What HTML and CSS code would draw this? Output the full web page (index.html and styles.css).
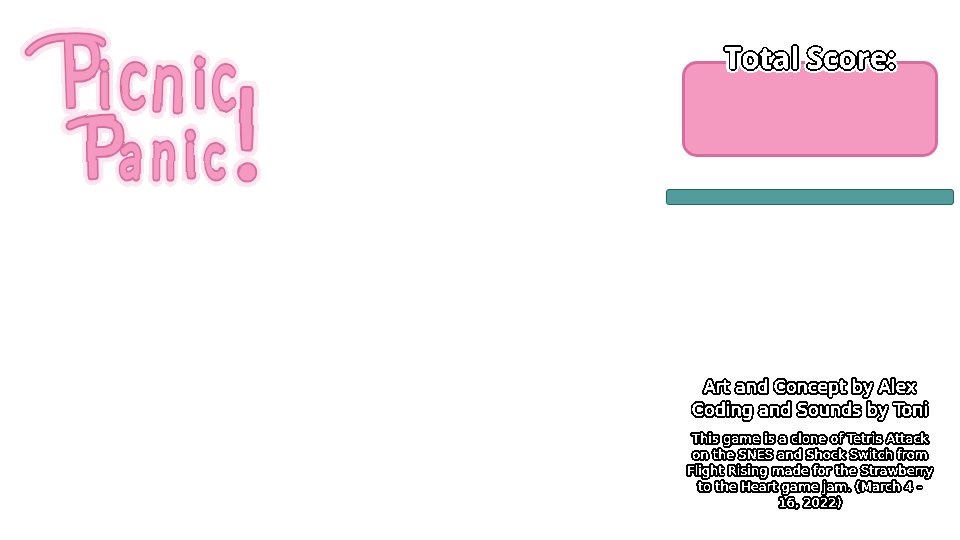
FILE: index.html
```html
<!DOCTYPE html>
<html>
<head>
    <meta charset="UTF-8">
    <title>Picnic Panic!</title>
    <link rel="stylesheet" href="styles.css">
</head>
<body>
    <svg class="filters" width="0" height="0">
        <filter id="crisp" x="-5%" y="-5%" width="110%" height="110%" color-interpolation-filters="sRGB">
            <feComponentTransfer>
                <feFuncR type="discrete" tableValues="0 1"/>
                <feFuncG type="discrete" tableValues="0 1"/>
                <feFuncB type="discrete" tableValues="0 1"/>
                <feFuncA type="discrete" tableValues="0 1"/>
            </feComponentTransfer>
        </filter>
        <filter id="handDrawn" x="-5%" y="-5%" width="110%" height="110%" color-interpolation-filters="sRGB">
            <feTurbulence type="fractalNoise" baseFrequency="0.03" numOctaves="1" seed="4" result="noise"/>
            <feDisplacementMap in="SourceGraphic" in2="noise" scale="4" xChannelSelector="R" yChannelSelector="G"/>
            <feComponentTransfer>
                <feFuncA type="discrete" tableValues="0 1"/>
            </feComponentTransfer>
        </filter>
    </svg>

    <div class="page">
        <svg class="logo" width="270" height="195" viewBox="0 0 270 195" role="img" aria-label="Picnic Panic!">
            <defs>
                <g id="logoLetters">
                    <path class="swash" d="M29 52 C38 41 52 37 68 37 C84 36 98 38 103 43"/>
                    <path class="swash" d="M70 126 C80 121 96 118 112 118"/>
                    <text transform="translate(62 106) rotate(-2) scale(.72 1)" font-size="96">P</text>
                    <text transform="translate(99 106) scale(.8 1)" font-size="62">i</text>
                    <text transform="translate(120 106) scale(.68 1)" font-size="80">c</text>
                    <text transform="translate(152 108) rotate(2) scale(.72 1)" font-size="78">n</text>
                    <text transform="translate(194 105) scale(.8 1)" font-size="66">i</text>
                    <text transform="translate(212 108) scale(.62 1)" font-size="80">c</text>
                    <text transform="translate(232 177) scale(.95 1)" font-size="122">!</text>
                    <text transform="translate(84 176) rotate(-1) scale(.85 .95)" font-size="82">P</text>
                    <text transform="translate(120 177) scale(.7 1)" font-size="62">a</text>
                    <text transform="translate(152 176) scale(.66 1)" font-size="62">n</text>
                    <text transform="translate(185 175) scale(.8 1)" font-size="60">i</text>
                    <text transform="translate(205 178) scale(.64 1)" font-size="64">c</text>
                </g>
            </defs>
            <g class="logo-art">
                <use href="#logoLetters" class="logo-halo"/>
                <use href="#logoLetters" class="logo-edge"/>
                <use href="#logoLetters" class="logo-fill"/>
            </g>
        </svg>

        <aside class="sidebar">
            <div class="score">
                <h1 class="score-title">Total Score:</h1>
                <div class="score-box"></div>
            </div>
            <div class="bar"></div>
            <div class="credits">
                <p class="credits-names">Art and Concept by Alex<br>Coding and Sounds by Toni</p>
                <p class="credits-about">This game is a clone of Tetris Attack on the SNES and Shock Switch from Flight Rising made for the Strawberry to the Heart game jam. (March 4 - 16, 2022)</p>
            </div>
        </aside>
    </div>
</body>
</html>
```

FILE: styles.css
```css
html, body {
    margin: 0;
    height: 100%;
    background-color: #fff;
    overflow: hidden;
}

.filters {
    position: absolute;
}

.page {
    display: flex;
    justify-content: space-between;
    height: 540px;
}

.logo {
    display: block;
}

.logo-art {
    filter: url(#handDrawn);
}

.logo text {
    font-family: "Lato", sans-serif;
    font-weight: 300;
}

.logo .swash {
    fill: none;
}

.logo-halo, .logo-edge, .logo-fill {
    stroke-linecap: round;
    stroke-linejoin: round;
}

.logo-halo {
    fill: #fde6f0;
    stroke: #fde6f0;
    stroke-width: 19px;
}

.logo-edge {
    fill: #d96c9f;
    stroke: #d96c9f;
    stroke-width: 9px;
}

.logo-fill {
    fill: #f49ac1;
    stroke: #f49ac1;
    stroke-width: 5px;
}

.sidebar {
    width: 288px;
    margin-right: 6px;
    display: flex;
    flex-direction: column;
}

.score {
    padding-top: 40px;
    display: flex;
    flex-direction: column;
    align-items: center;
}

.score-title {
    margin: 0 0 -15px;
    position: relative;
    font-family: "Open Sans", sans-serif;
    font-weight: 700;
    font-size: 29.5px;
    line-height: 36px;
    color: #fff;
    filter: url(#crisp);
    text-shadow:
        -1px 0 0 #000, 1px 0 0 #000, 0 -1px 0 #000, 0 1px 0 #000,
        -1px -1px 0 #000, 1px -1px 0 #000, -1px 1px 0 #000, 1px 1px 0 #000,
        -2px 0 0 #000, 2px 0 0 #000, 0 -2px 0 #000, 0 2px 0 #000,
        -4px 0 0 #fff, 4px 0 0 #fff, 0 -4px 0 #fff, 0 4px 0 #fff,
        -3px -3px 0 #fff, 3px -3px 0 #fff, -3px 3px 0 #fff, 3px 3px 0 #fff;
}

.score-box {
    box-sizing: border-box;
    width: 256px;
    height: 96px;
    background-color: #f49ac1;
    border: 3px solid #d96c9f;
    border-radius: 15px;
}

.bar {
    box-sizing: border-box;
    height: 16px;
    margin-top: 32px;
    background-color: #539c9c;
    border: 1px solid #1f6666;
    border-radius: 3px;
}

.credits {
    margin-top: 171px;
    padding: 0 20px;
    text-align: center;
    color: #fff;
    font-family: "DejaVu Sans", sans-serif;
    filter: url(#crisp);
    -webkit-text-stroke: 0.5px #fff;
    text-shadow:
        -1px 0 0 #000, 1px 0 0 #000, 0 -1px 0 #000, 0 1px 0 #000,
        -2px 0 0 #000, 2px 0 0 #000, 0 -2px 0 #000, 0 2px 0 #000,
        -1px -1px 0 #000, 1px -1px 0 #000, -1px 1px 0 #000, 1px 1px 0 #000,
        -2px -1px 0 #000, 2px -1px 0 #000, -2px 1px 0 #000, 2px 1px 0 #000,
        -1px -2px 0 #000, 1px -2px 0 #000, -1px 2px 0 #000, 1px 2px 0 #000;
}

.credits p {
    margin: 0;
}

.credits-names {
    font-size: 17.5px;
    line-height: 23px;
}

.credits .credits-about {
    margin-top: 9px;
    font-size: 13.1px;
    line-height: 16px;
    -webkit-text-stroke: 0.2px #fff;
}
```
